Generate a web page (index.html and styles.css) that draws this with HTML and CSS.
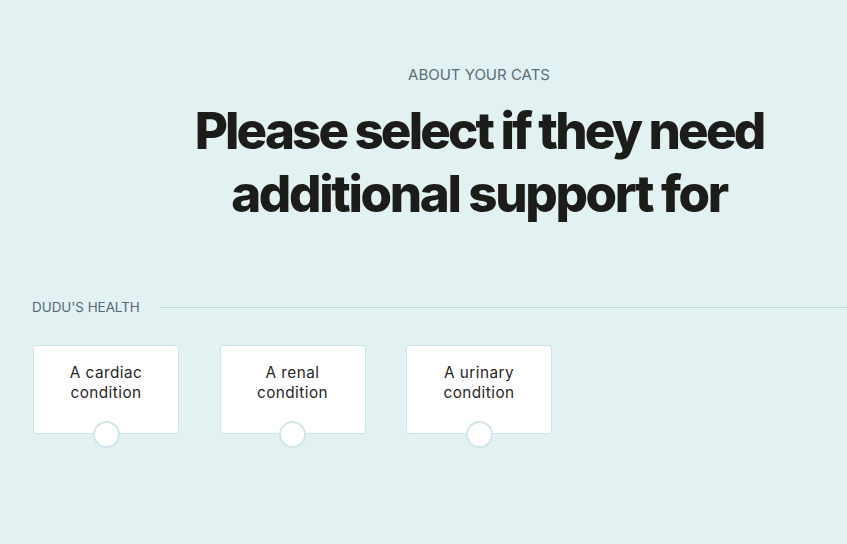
FILE: index.html
```html
<!DOCTYPE html>
<html>
<head>
<meta charset="utf-8">
<link rel="stylesheet" href="styles.css">
</head>
<body>
<header class="intro">
  <p class="eyebrow">ABOUT YOUR CATS</p>
  <h1 class="title">Please select if they need<br><span class="title-line2">additional support for</span></h1>
</header>
<section class="pet">
  <div class="pet-head">
    <span class="pet-name">DUDU'S HEALTH</span>
    <span class="rule"></span>
  </div>
  <div class="options">
    <label class="card"><span class="card-text">A cardiac<br>condition</span><span class="radio"></span></label>
    <label class="card"><span class="card-text">A renal<br>condition</span><span class="radio"></span></label>
    <label class="card"><span class="card-text">A urinary<br>condition</span><span class="radio"></span></label>
  </div>
</section>
</body>
</html>
```
FILE: styles.css
```css
html, body {
  margin: 0;
  padding: 0;
}
body {
  background: #e2f1f1;
  font-family: "Inter", "Noto Sans", sans-serif;
  width: 847px;
  height: 544px;
  overflow: hidden;
}
.intro {
  padding: 66px 0 0 111px;
  text-align: center;
}
.eyebrow {
  margin: 0;
  font-size: 15px;
  line-height: 18px;
  color: #5b6f79;
}
.title {
  margin: 15px 0 0;
  font-size: 51px;
  line-height: 63px;
  font-weight: 800;
  letter-spacing: -0.056em;
  color: #1c1c1a;
}
.title-line2 {
  letter-spacing: -0.046em;
}
.pet {
  padding: 73px 0 0 32px;
}
.pet-head {
  display: flex;
  align-items: center;
  gap: 20px;
}
.pet-name {
  font-size: 13.4px;
  line-height: 18px;
  color: #55687a;
  white-space: nowrap;
}
.rule {
  flex: 1;
  height: 1px;
  background: #bfd7db;
}
.options {
  display: flex;
  gap: 40.5px;
  margin-top: 29px;
  padding-left: 1px;
}
.card {
  position: relative;
  box-sizing: border-box;
  width: 146px;
  height: 89px;
  background: #ffffff;
  border: 1px solid #cfe4e7;
  border-radius: 3px;
  display: flex;
  justify-content: center;
  padding-top: 17px;
}
.card-text {
  font-size: 15.3px;
  line-height: 20px;
  letter-spacing: 0.03em;
  color: #262626;
  text-align: center;
}
.radio {
  position: absolute;
  left: 50%;
  bottom: -15px;
  width: 27px;
  height: 27px;
  margin-left: -13.5px;
  box-sizing: border-box;
  border-radius: 50%;
  border: 2px solid #d2e6e9;
  background: #ffffff;
}
```
